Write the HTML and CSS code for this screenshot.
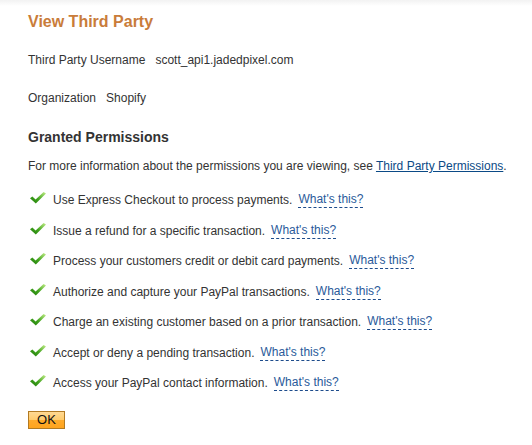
FILE: index.html
```html
<!DOCTYPE html>
<html>
<head>
<meta charset="utf-8">
<link rel="stylesheet" href="styles.css">
</head>
<body>
<div class="page">
  <h1 class="title">View Third Party</h1>
  <div class="field"><span class="label">Third Party Username</span><span class="value">scott_api1.jadedpixel.com</span></div>
  <div class="field field-org"><span class="label">Organization</span><span class="value">Shopify</span></div>
  <h2 class="subtitle">Granted Permissions</h2>
  <p class="intro">For more information about the permissions you are viewing, see <a class="link" href="#">Third Party Permissions</a>.</p>
  <ul class="perms">
    <li class="perm"><svg class="check" viewBox="0 0 16 12" width="16" height="12"><use href="#chk"/></svg><span>Use Express Checkout to process payments.</span><a class="help" href="#">What's this?</a></li>
    <li class="perm"><svg class="check" viewBox="0 0 16 12" width="16" height="12"><use href="#chk"/></svg><span>Issue a refund for a specific transaction.</span><a class="help" href="#">What's this?</a></li>
    <li class="perm"><svg class="check" viewBox="0 0 16 12" width="16" height="12"><use href="#chk"/></svg><span>Process your customers credit or debit card payments.</span><a class="help" href="#">What's this?</a></li>
    <li class="perm"><svg class="check" viewBox="0 0 16 12" width="16" height="12"><use href="#chk"/></svg><span>Authorize and capture your PayPal transactions.</span><a class="help" href="#">What's this?</a></li>
    <li class="perm"><svg class="check" viewBox="0 0 16 12" width="16" height="12"><use href="#chk"/></svg><span>Charge an existing customer based on a prior transaction.</span><a class="help" href="#">What's this?</a></li>
    <li class="perm"><svg class="check" viewBox="0 0 16 12" width="16" height="12"><use href="#chk"/></svg><span>Accept or deny a pending transaction.</span><a class="help" href="#">What's this?</a></li>
    <li class="perm"><svg class="check" viewBox="0 0 16 12" width="16" height="12"><use href="#chk"/></svg><span>Access your PayPal contact information.</span><a class="help" href="#">What's this?</a></li>
  </ul>
  <button class="ok" type="button">OK</button>
</div>
<svg width="0" height="0" class="defs">
  <defs>
    <linearGradient id="g" x1="0" y1="1" x2="1" y2="0">
      <stop offset="0" stop-color="#1f7a0a"/>
      <stop offset="0.45" stop-color="#3fa21c"/>
      <stop offset="1" stop-color="#c4ef8a"/>
    </linearGradient>
    <symbol id="chk" viewBox="0 0 16 12">
      <polygon points="0,6.2 2.4,4.4 5.6,7.4 13.6,0 16,1.6 5.8,11.6" fill="url(#g)"/>
    </symbol>
  </defs>
</svg>
</body>
</html>
```
FILE: styles.css
```css
html, body {
  margin: 0;
  padding: 0;
  background: #fff;
}
body {
  font-family: "Liberation Sans", Arial, sans-serif;
  font-size: 12px;
  color: #333;
  background: linear-gradient(#f2f2f2, #fff 6px);
  min-height: 445px;
}
.page {
  padding: 12px 0 0 28px;
}
.title {
  margin: 0;
  font-size: 16px;
  line-height: 20px;
  font-weight: bold;
  color: #c97c3a;
}
.field {
  margin-top: 20px;
  line-height: 16px;
  display: flex;
  gap: 10px;
}
.field-org {
  margin-top: 22px;
}
.subtitle {
  margin: 22px 0 0;
  font-size: 14px;
  line-height: 18px;
  font-weight: bold;
  color: #333;
}
.intro {
  margin: 12px 0 0;
  line-height: 16px;
  white-space: nowrap;
}
.link {
  color: #0b4a86;
  text-decoration: underline;
}
.perms {
  list-style: none;
  margin: 18px 0 0;
  padding: 0;
  display: flex;
  flex-direction: column;
  gap: 14.5px;
}
.perm {
  display: flex;
  align-items: center;
  line-height: 16px;
}
.check {
  margin: 0 7px 0 2px;
  flex: none;
  position: relative;
  top: -2px;
}
.help {
  margin-left: 6px;
  color: #2a5a9a;
  text-decoration: none;
  border-bottom: 1px dashed #1d4c8c;
  line-height: 15px;
}
.defs {
  position: absolute;
  width: 0;
  height: 0;
}
.ok {
  margin-top: 20px;
  width: 37px;
  height: 18px;
  padding: 0;
  font-family: "Liberation Sans", Arial, sans-serif;
  font-size: 13px;
  line-height: 16px;
  color: #111;
  border: 1px solid #b27a22;
  background: linear-gradient(#ffd993 0, #ffcb6c 50%, #ffab2c 50%, #ffa41e 100%);
  border-radius: 0;
}
```
